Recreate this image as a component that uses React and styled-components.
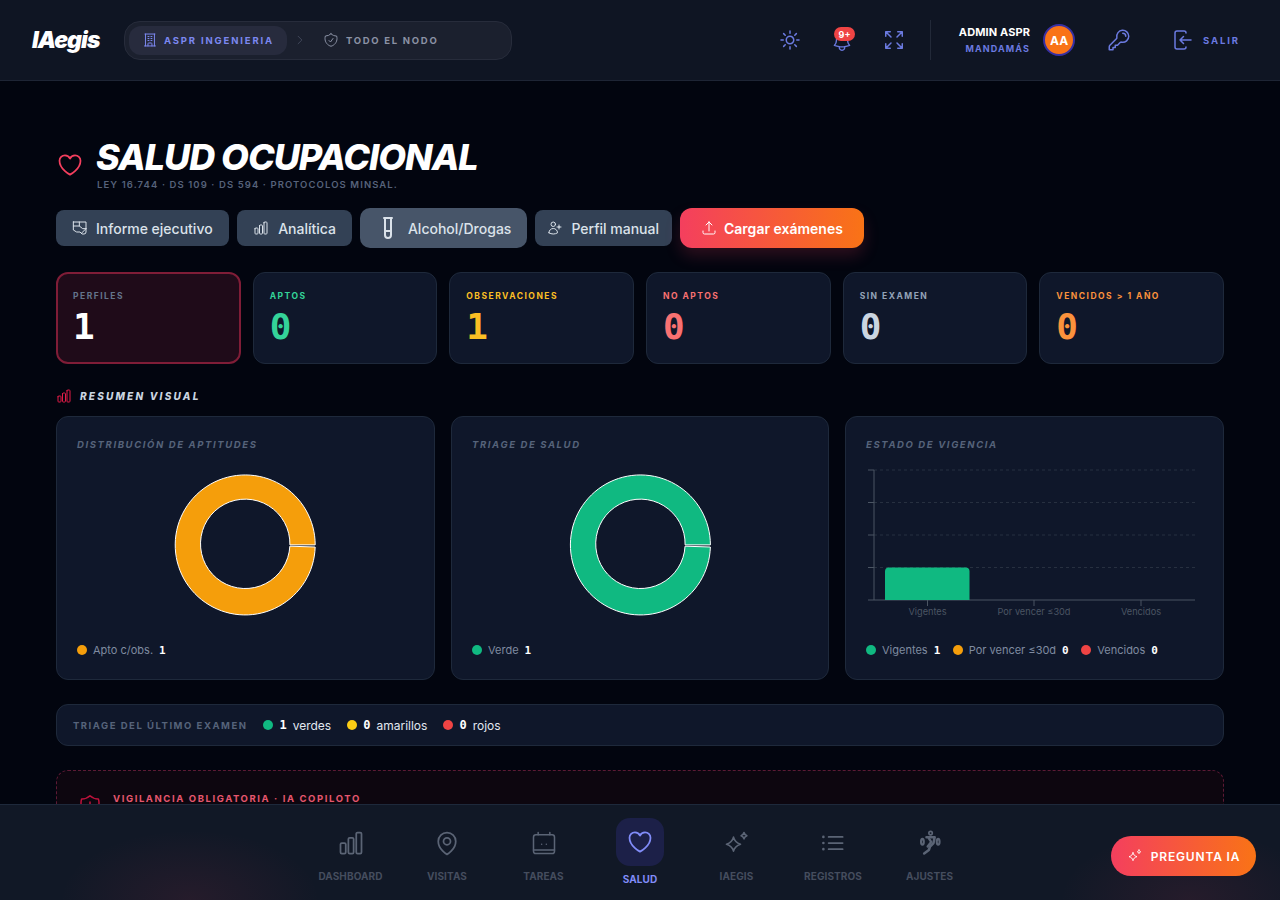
import React from 'react';
import styled, { createGlobalStyle } from 'styled-components';
import {
  HiOutlineSun, HiOutlineBell, HiOutlineArrowsPointingOut, HiOutlineKey, HiOutlineHeart,
  HiOutlineChartBar, HiOutlineMapPin, HiOutlineListBullet, HiOutlineArrowUpTray,
  HiOutlineUserPlus, HiOutlineShieldCheck, HiOutlineChevronRight, HiOutlineBuildingOffice, HiOutlineShieldExclamation,
} from 'react-icons/hi2';

const Global = createGlobalStyle`
  html, body { margin: 0; padding: 0; height: 100%; background: #02050f; overflow: hidden; }
  * { box-sizing: border-box; }
  body { font-family: Inter, "Liberation Sans", sans-serif; color: #fff; }
`;

const Shell = styled.div`display:flex;flex-direction:column;height:900px;width:1280px;position:relative;overflow:hidden;background:#02050f;`;
const Header = styled.header`flex:none;height:81px;background:#0f1523;border-bottom:1px solid #1e2535;display:flex;align-items:center;padding:0 32px;`;
const Logo = styled.div`font-size:23px;font-weight:900;font-style:italic;letter-spacing:-0.04em;color:#fff;width:92px;`;
const Switcher = styled.div`width:388px;height:39px;border-radius:16px;background:#1b202e;border:1px solid #272c3b;display:flex;align-items:center;padding:0 4px;`;
const Pill = styled.div`display:flex;align-items:center;gap:${p=>p.$active?6:7}px;height:29px;width:158px;border-radius:12px;padding:0 13px;background:${p=>p.$active?'#272b3d':'transparent'};color:${p=>p.$active?'#7c88f0':'#8b92a5'};font-size:9.5px;font-weight:700;letter-spacing:${p=>p.$active?'.195em':'.18em'};white-space:nowrap;`;
const Chevron = styled.span`display:flex;margin:0 4px 0 7px;color:#4b5265;`;
const Right = styled.div`margin-left:auto;display:flex;align-items:center;height:40px;color:#6b7ae0;`;
const IconBtn = styled.div`width:52px;display:flex;justify-content:center;position:relative;`;
const BellWrap = styled.span`display:flex;transform:translateY(2px);`;
const Badge = styled.span`position:absolute;top:-2px;left:18px;width:21px;height:14px;border-radius:7px;background:#ef4444;color:#fff;font-size:9px;font-weight:700;display:flex;align-items:center;justify-content:center;`;
const Divider = styled.div`width:1px;height:40px;background:#222938;margin:0 27px 0 10px;`;
const User = styled.div`text-align:right;width:72px;`;
const UserName = styled.div`font-size:11px;font-weight:700;letter-spacing:.01em;color:#fff;line-height:14px;white-space:nowrap;`;
const UserRole = styled.div`font-size:9px;font-weight:700;letter-spacing:.125em;color:#6b7ae0;line-height:14px;margin-top:3px;`;
const Avatar = styled.div`width:32px;height:32px;border-radius:50%;background:#f97316;border:2px solid #3730a3;margin-left:13px;display:flex;align-items:center;justify-content:center;color:#fff;font-size:12px;font-weight:700;`;
const KeyBox = styled.div`margin:0 0 0 32px;display:flex;`;
const Salir = styled.div`display:flex;align-items:center;gap:9px;margin-left:39px;padding-right:8px;font-size:9.5px;font-weight:700;letter-spacing:.2em;`;

const Main = styled.main`flex:1;min-height:0;overflow:hidden;padding:56px 56px 0;`;
const TitleRow = styled.div`display:flex;align-items:center;gap:12px;color:#f43f5e;`;
const Title = styled.h1`margin:0;font-size:36px;line-height:40px;font-weight:800;font-style:italic;letter-spacing:-0.028em;color:#fff;white-space:nowrap;`;
const Sub = styled.div`font-size:9.5px;line-height:14px;font-weight:600;letter-spacing:.115em;color:#56627a;margin:1px 0 0 1px;`;
const Actions = styled.div`display:flex;align-items:center;gap:8px;margin-top:16px;height:40px;`;
const Btn = styled.div`display:flex;align-items:center;gap:${p=>p.$gap||8}px;height:${p=>p.$big?40:36}px;padding:0 ${p=>p.$pad||16}px;border-radius:${p=>p.$big?10:8}px;background:${p=>p.$big?'#475569':'#334155'};font-size:14px;font-weight:500;color:#dbe2ea;white-space:nowrap;`;
const Primary = styled(Btn)`height:40px;border-radius:12px;background:linear-gradient(90deg,#f43f5e,#f97316);color:#fff;font-weight:600;box-shadow:0 8px 16px rgba(244,63,94,.18);`;

const Stats = styled.div`display:grid;grid-template-columns:repeat(6,1fr);gap:12px;margin-top:24px;`;
const Stat = styled.div`height:92px;border-radius:12px;padding:${p=>p.$hot?'16px 15px':'17px 16px'};background:${p=>p.$hot?'#1f0b19':'#0f172a'};border:${p=>p.$hot?'2px solid #7f1d37':'1px solid #1e293b'};`;
const StatLabel = styled.div`font-size:8.5px;line-height:12px;font-weight:700;letter-spacing:.175em;color:${p=>p.$c};white-space:nowrap;`;
const StatValue = styled.div`font-family:"DejaVu Sans Mono",monospace;font-size:36px;line-height:40px;font-weight:700;color:${p=>p.$c};margin-top:5px;`;

const SectionTitle = styled.div`display:flex;align-items:center;gap:8px;margin-top:24px;height:16px;color:#e11d48;font-size:10px;font-weight:800;font-style:italic;letter-spacing:.22em;`;
const SectionText = styled.span`color:#cbd5e1;`;
const Charts = styled.div`display:grid;grid-template-columns:379px 378px 379px;gap:16px;margin-top:12px;`;
const Card = styled.div`height:264px;border-radius:12px;background:#0f172a;border:1px solid #1e293b;padding:20px;display:flex;flex-direction:column;`;
const CardTitle = styled.div`font-size:9.5px;line-height:14px;font-weight:700;font-style:italic;letter-spacing:.17em;color:#56637a;white-space:nowrap;margin-top:1px;`;
const ChartArea = styled.div`flex:1;display:flex;justify-content:center;align-items:flex-start;margin-top:15px;`;
const Legend = styled.div`display:flex;align-items:center;gap:12.5px;height:16px;margin-bottom:1px;`;
const LegendItem = styled.div`display:flex;align-items:center;gap:6px;font-size:11px;color:#7f8ba0;white-space:nowrap;`;
const Dot = styled.span`width:10px;height:10px;border-radius:50%;background:${p=>p.$c};flex:none;`;
const Num = styled.b`font-family:"DejaVu Sans Mono",monospace;font-size:11px;font-weight:700;color:#fff;`;

const Triage = styled.div`display:flex;align-items:center;gap:16px;height:42px;margin-top:24px;padding:0 16px;border-radius:12px;background:#0f172a;border:1px solid #1e293b;`;
const TriageLabel = styled.div`font-size:9.5px;font-weight:700;letter-spacing:.16em;color:#56637a;white-space:nowrap;`;
const TriageItem = styled.div`display:flex;align-items:center;gap:6px;font-size:12px;color:#e2e8f0;white-space:nowrap;`;
const TriageNum = styled.b`font-family:"DejaVu Sans Mono",monospace;font-size:12px;color:#fff;`;
const Watch = styled.div`margin-top:24px;height:180px;border:1px dashed #5c1a35;border-radius:12px;background:#0d060f;padding:22px 22px 22px 21px;display:flex;gap:11px;color:#be123c;`;
const WatchTitle = styled.div`font-size:9.5px;line-height:12px;font-weight:700;letter-spacing:.167em;color:#e5566e;white-space:nowrap;`;

const Nav = styled.nav`flex:none;height:96px;background:#111826;border-top:1px solid #1e293b;display:flex;justify-content:center;position:relative;overflow:hidden;z-index:2;`;
const Glow = styled.div`position:absolute;bottom:-70px;left:${p=>p.$x}px;width:260px;height:140px;border-radius:50%;background:radial-gradient(closest-side,rgba(244,63,94,.09),rgba(244,63,94,0));`;
const NavItem = styled.div`width:96.5px;display:flex;flex-direction:column;align-items:center;color:${p=>p.$active?'#818cf8':'#5b6475'};position:relative;`;
const NavIcon = styled.div`width:48px;height:48px;margin-top:13px;padding-top:${p=>p.$active?0:2}px;border-radius:14px;background:${p=>p.$active?'#1c2048':'transparent'};display:flex;align-items:center;justify-content:center;`;
const NavLabel = styled.div`font-size:10px;line-height:12px;font-weight:700;letter-spacing:.01em;color:${p=>p.$active?'#818cf8':'#454d5e'};margin-top:${p=>p.$active?7:4}px;white-space:nowrap;`;
const Fab = styled.div`position:absolute;right:24px;bottom:24px;width:145px;height:40px;border-radius:20px;background:linear-gradient(90deg,#f43f5e,#f97316);display:flex;align-items:center;justify-content:center;gap:8px;font-size:12px;font-weight:600;letter-spacing:.07em;color:#fff;z-index:3;`;

const Ico = ({ children, size = 24, sw = 1.5 }) => (
  <svg width={size} height={size} viewBox="0 0 24 24" fill="none" stroke="currentColor" strokeWidth={sw} strokeLinecap="round" strokeLinejoin="round">{children}</svg>
);
const Door = () => <Ico><path d="M16 5V5a2 2 0 0 0-2-2H7a2 2 0 0 0-2 2v14a2 2 0 0 0 2 2h7a2 2 0 0 0 2-2"/><path d="M21 12H10m3.500-3.500L10 12l3.500 3.500"/></Ico>;
const Calendar = () => <Ico size={28} sw={1.3}><rect x="3" y="5" width="18" height="16" rx="2"/><path d="M7 3v2M17 3v2M3 18h18"/><path d="M10 13h.01M14 13h.01"/></Ico>;
const Sparkle = ({ size = 28 }) => <Ico size={size} sw={1.4}><path d="M9 8c.8 3.400 2.200 4.800 6 6-3.800 1.200-5.200 2.600-6 6-.8-3.400-2.200-4.800-6-6 3.800-1.200 5.200-2.600 6-6Z" transform="translate(0 -1)"/><path d="M18 3c.3 1.500 1 2.200 2.500 2.700-1.500.5-2.200 1.200-2.500 2.700-.3-1.500-1-2.200-2.500-2.700C17 5.200 17.700 4.500 18 3Z"/></Ico>;
const Runner = () => <Ico size={28} sw={1.4}><circle cx="12.500" cy="3.500" r="1.500"/><path d="M9 7h7l-1 5-3 3-1 3-4 3" strokeWidth="2.200"/><path d="M11 8l2 3-3 4" strokeWidth="2"/><ellipse cx="5.500" cy="11" rx="1.200" ry="2.500" strokeWidth="1.800"/><ellipse cx="19" cy="11" rx="1.200" ry="2.500" strokeWidth="1.800"/></Ico>;
const Tube = () => <Ico><path d="M8 2h8M9 2v17a3 3 0 0 0 6 0V2" strokeWidth="2"/><path d="M9 15h6" strokeWidth="2"/></Ico>;
const Report = () => <Ico size={16}><path d="M2 3h19v15a3 3 0 0 1-3 3h-3l-3-3H7l-5-3V3Z"/><path d="M2 9h9l5 4h5M11 3v6M15 19l6-6"/></Ico>;

const Donut = ({ color, dx }) => (
  <svg width="160" height="160" viewBox={`${dx} 0 160 160`}>
    <path d="M149.800 77.900 A70 70 0 1 0 149.770 80 L124.450 79.200 A44.700 44.700 0 1 1 124.500 77.900 Z" fill={color} stroke="#fff" strokeWidth="1" />
  </svg>
);

const Bars = () => {
  const ys = [3, 35.5, 68, 100.5];
  const ticks = [[61.5, 'Vigentes'], [168, 'Por vencer ≤30d'], [275, 'Vencidos']];
  return (
    <svg width="337" height="160" viewBox="0 0 337 160">
      {ys.map(y => <line key={y} x1="8" x2="329" y1={y} y2={y} stroke="#273040" strokeDasharray="3 3" />)}
      {ys.map(y => <line key={y} x1="2" x2="8" y1={y} y2={y} stroke="#4b5563" />)}
      <line x1="8" x2="8" y1="3" y2="133" stroke="#4b5563" strokeWidth="1" />
      <line x1="2" x2="329" y1="133" y2="133" stroke="#4b5563" strokeWidth="1" />
      <path d="M19 133V104.500a4 4 0 0 1 4-4H99.500a4 4 0 0 1 4 4V133Z" fill="#10b981" />
      {ticks.map(([x, t]) => <g key={t}><line x1={x} x2={x} y1="133" y2="139" stroke="#4b5563" /><text x={x} y="147.500" textAnchor="middle" fontSize="9.2" fill="#4b5563" fontFamily="Inter, sans-serif">{t}</text></g>)}
    </svg>
  );
};

const stats = [
  ['PERFILES', '1', '#64748b', '#fff', true], ['APTOS', '0', '#34d399', '#34d399'], ['OBSERVACIONES', '1', '#fbbf24', '#fbbf24'],
  ['NO APTOS', '0', '#f87171', '#f87171'], ['SIN EXAMEN', '0', '#94a3b8', '#cbd5e1'], ['VENCIDOS > 1 AÑO', '0', '#fb923c', '#fb923c'],
];
const navs = [
  ['DASHBOARD', <HiOutlineChartBar size={28} />], ['VISITAS', <HiOutlineMapPin size={28} />], ['TAREAS', <Calendar />],
  ['SALUD', <HiOutlineHeart size={28} />, true], ['IAEGIS', <Sparkle />], ['REGISTROS', <HiOutlineListBullet size={28} />], ['AJUSTES', <Runner />],
];

export default function App() {
  return (
    <Shell>
      <Global />
      <Header>
        <Logo>IAegis</Logo>
        <Switcher>
          <Pill $active><HiOutlineBuildingOffice size={16} />ASPR INGENIERIA</Pill>
          <Chevron><HiOutlineChevronRight size={12} /></Chevron>
          <Pill><HiOutlineShieldCheck size={16} />TODO EL NODO</Pill>
        </Switcher>
        <Right>
          <IconBtn><HiOutlineSun size={24} /></IconBtn>
          <IconBtn><BellWrap><HiOutlineBell size={22} /></BellWrap><Badge>9+</Badge></IconBtn>
          <IconBtn><HiOutlineArrowsPointingOut size={24} /></IconBtn>
          <Divider />
          <User><UserName>ADMIN ASPR</UserName><UserRole>MANDAMÁS</UserRole></User>
          <Avatar>AA</Avatar>
          <KeyBox><HiOutlineKey size={24} /></KeyBox>
          <Salir><Door />SALIR</Salir>
        </Right>
      </Header>
      <Main>
        <TitleRow>
          <HiOutlineHeart size={28} />
          <div>
            <Title>SALUD OCUPACIONAL</Title>
            <Sub>LEY 16.744 · DS 109 · DS 594 · PROTOCOLOS MINSAL.</Sub>
          </div>
        </TitleRow>
        <Actions>
          <Btn><Report />Informe ejecutivo</Btn>
          <Btn $gap={9} $pad={16.5}><HiOutlineChartBar size={16} />Analítica</Btn>
          <Btn $big $pad={15.5}><Tube />Alcohol/Drogas</Btn>
          <Btn $pad={12.5}><HiOutlineUserPlus size={16} />Perfil manual</Btn>
          <Primary $pad={21} $gap={7.5}><HiOutlineArrowUpTray size={16} />Cargar exámenes</Primary>
        </Actions>
        <Stats>
          {stats.map(([l, v, c, vc, hot]) => (
            <Stat key={l} $hot={hot}><StatLabel $c={c}>{l}</StatLabel><StatValue $c={vc}>{v}</StatValue></Stat>
          ))}
        </Stats>
        <SectionTitle><HiOutlineChartBar size={16} /><SectionText>RESUMEN VISUAL</SectionText></SectionTitle>
        <Charts>
          <Card>
            <CardTitle>DISTRIBUCIÓN DE APTITUDES</CardTitle>
            <ChartArea><Donut color="#f59e0b" dx={0.6} /></ChartArea>
            <Legend><LegendItem><Dot $c="#f59e0b" />Apto c/obs.<Num>1</Num></LegendItem></Legend>
          </Card>
          <Card>
            <CardTitle>TRIAGE DE SALUD</CardTitle>
            <ChartArea><Donut color="#10b981" dx={-0.6} /></ChartArea>
            <Legend><LegendItem><Dot $c="#10b981" />Verde<Num>1</Num></LegendItem></Legend>
          </Card>
          <Card>
            <CardTitle>ESTADO DE VIGENCIA</CardTitle>
            <ChartArea><Bars /></ChartArea>
            <Legend>
              <LegendItem><Dot $c="#10b981" />Vigentes<Num>1</Num></LegendItem>
              <LegendItem><Dot $c="#f59e0b" />Por vencer ≤30d<Num>0</Num></LegendItem>
              <LegendItem><Dot $c="#ef4444" />Vencidos<Num>0</Num></LegendItem>
            </Legend>
          </Card>
        </Charts>
        <Triage>
          <TriageLabel>TRIAGE DEL ÚLTIMO EXAMEN</TriageLabel>
          <TriageItem><Dot $c="#10b981" /><TriageNum>1</TriageNum>verdes</TriageItem>
          <TriageItem><Dot $c="#facc15" /><TriageNum>0</TriageNum>amarillos</TriageItem>
          <TriageItem><Dot $c="#ef4444" /><TriageNum>0</TriageNum>rojos</TriageItem>
        </Triage>
        <Watch>
          <HiOutlineShieldExclamation size={24} />
          <WatchTitle>VIGILANCIA OBLIGATORIA · IA COPILOTO</WatchTitle>
        </Watch>
      </Main>
      <Nav>
        <Glow $x={60} /><Glow $x={1060} />
        {navs.map(([l, icon, a]) => (
          <NavItem key={l} $active={a}>
            <NavIcon $active={a}>{icon}</NavIcon>
            <NavLabel $active={a}>{l}</NavLabel>
          </NavItem>
        ))}
      </Nav>
      <Fab><Sparkle size={16} />PREGUNTA IA</Fab>
    </Shell>
  );
}
